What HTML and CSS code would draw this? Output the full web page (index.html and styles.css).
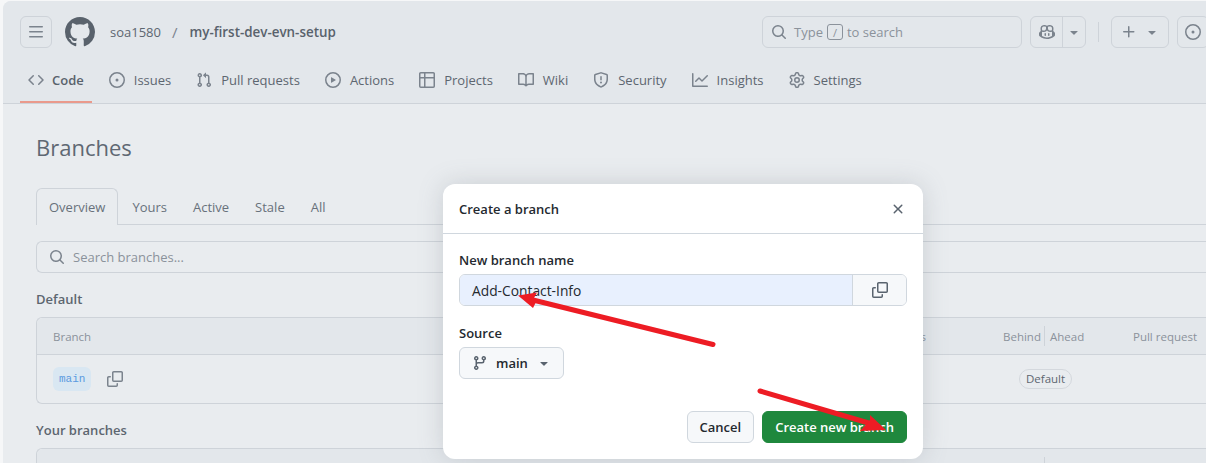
FILE: index.html
```html
<!DOCTYPE html>
<html lang="en">
<head>
    <meta charset="UTF-8">
    <title>Branches</title>
    <link rel="stylesheet" href="styles.css">
</head>
<body>
    <svg class="icon-defs" aria-hidden="true">
        <symbol id="i-bars" viewBox="0 0 16 16"><path d="M1 2.75A.75.75 0 0 1 1.75 2h12.5a.75.75 0 0 1 0 1.5H1.75A.75.75 0 0 1 1 2.75Zm0 5A.75.75 0 0 1 1.75 7h12.5a.75.75 0 0 1 0 1.5H1.75A.75.75 0 0 1 1 7.75ZM1.75 12h12.5a.75.75 0 0 1 0 1.5H1.75a.75.75 0 0 1 0-1.5Z"/></symbol>
        <symbol id="i-github" viewBox="0 0 16 16"><path d="M8 0c4.42 0 8 3.58 8 8a8.013 8.013 0 0 1-5.45 7.59c-.4.08-.55-.17-.55-.38 0-.27.01-1.13.01-2.2 0-.75-.25-1.23-.54-1.48 1.78-.2 3.65-.88 3.65-3.95 0-.88-.31-1.59-.82-2.15.08-.2.36-1.02-.08-2.12 0 0-.67-.22-2.2.82-.64-.18-1.32-.27-2-.27-.68 0-1.36.09-2 .27-1.53-1.03-2.2-.82-2.2-.82-.44 1.1-.16 1.92-.08 2.12-.51.56-.82 1.28-.82 2.15 0 3.06 1.86 3.75 3.64 3.95-.23.2-.44.55-.51 1.07-.46.21-1.61.55-2.33-.66-.15-.24-.6-.83-1.23-.82-.67.01-.27.38.01.53.34.19.73.9.82 1.13.16.45.68 1.31 2.69.94 0 .67.01 1.3.01 1.49 0 .21-.15.45-.55.38A7.995 7.995 0 0 1 0 8c0-4.42 3.58-8 8-8Z"/></symbol>
        <symbol id="i-search" viewBox="0 0 16 16"><path d="M10.68 11.74a6 6 0 0 1-7.922-8.982 6 6 0 0 1 8.982 7.922l3.04 3.04a.749.749 0 0 1-.326 1.275.749.749 0 0 1-.734-.215ZM11.5 7a4.499 4.499 0 1 0-8.997 0A4.499 4.499 0 0 0 11.5 7Z"/></symbol>
        <symbol id="i-code" viewBox="0 0 16 16"><path d="m11.28 3.22 4.25 4.25a.75.75 0 0 1 0 1.06l-4.25 4.25a.749.749 0 0 1-1.275-.326.749.749 0 0 1 .215-.734L13.94 8l-3.72-3.72a.749.749 0 0 1 .326-1.275.749.749 0 0 1 .734.215Zm-6.56 0a.751.751 0 0 1 1.042.018.751.751 0 0 1 .018 1.042L2.06 8l3.72 3.72a.749.749 0 0 1-.326 1.275.749.749 0 0 1-.734-.215L.47 8.53a.75.75 0 0 1 0-1.06Z"/></symbol>
        <symbol id="i-issue" viewBox="0 0 16 16"><path d="M8 9.5a1.5 1.5 0 1 0 0-3 1.5 1.5 0 0 0 0 3Z"/><path d="M8 0a8 8 0 1 1 0 16A8 8 0 0 1 8 0ZM1.5 8a6.5 6.5 0 1 0 13 0 6.5 6.5 0 0 0-13 0Z"/></symbol>
        <symbol id="i-pr" viewBox="0 0 16 16"><path d="M1.5 3.25a2.25 2.25 0 1 1 3 2.122v5.256a2.251 2.251 0 1 1-1.5 0V5.372A2.25 2.25 0 0 1 1.5 3.25Zm5.677-.177L9.573.677A.25.25 0 0 1 10 .854V2.5h1A2.5 2.5 0 0 1 13.5 5v5.628a2.251 2.251 0 1 1-1.5 0V5a1 1 0 0 0-1-1h-1v1.646a.25.25 0 0 1-.427.177L7.177 3.427a.25.25 0 0 1 0-.354ZM3.75 2.5a.75.75 0 1 0 0 1.5.75.75 0 0 0 0-1.5Zm0 9.5a.75.75 0 1 0 0 1.5.75.75 0 0 0 0-1.5Zm8.25.75a.75.75 0 1 0 1.5 0 .75.75 0 0 0-1.5 0Z"/></symbol>
        <symbol id="i-play" viewBox="0 0 16 16"><path d="M8 0a8 8 0 1 1 0 16A8 8 0 0 1 8 0ZM1.5 8a6.5 6.5 0 1 0 13 0 6.5 6.5 0 0 0-13 0Zm4.879-2.773 4.264 2.559a.25.25 0 0 1 0 .428l-4.264 2.559A.25.25 0 0 1 6 10.559V5.442a.25.25 0 0 1 .379-.215Z"/></symbol>
        <symbol id="i-table" viewBox="0 0 16 16"><path d="M0 1.75C0 .784.784 0 1.75 0h12.5C15.216 0 16 .784 16 1.75v12.5A1.75 1.75 0 0 1 14.25 16H1.75A1.75 1.75 0 0 1 0 14.25ZM6.5 6.5v8h7.75a.25.25 0 0 0 .25-.25V6.5Zm8-1.5V1.75a.25.25 0 0 0-.25-.25H6.5V5Zm-13 1.5v7.75c0 .138.112.25.25.25H5v-8ZM5 5V1.5H1.75a.25.25 0 0 0-.25.25V5Z"/></symbol>
        <symbol id="i-book" viewBox="0 0 16 16"><path d="M0 1.75A.75.75 0 0 1 .75 1h4.253c1.227 0 2.317.59 3 1.501A3.743 3.743 0 0 1 11.006 1h4.245a.75.75 0 0 1 .75.75v10.5a.75.75 0 0 1-.75.75h-4.507a2.25 2.25 0 0 0-1.591.659l-.622.621a.75.75 0 0 1-1.06 0l-.622-.621A2.25 2.25 0 0 0 5.258 13H.75a.75.75 0 0 1-.75-.75Zm7.251 10.324.004-5.073-.002-2.253A2.25 2.25 0 0 0 5.003 2.5H1.5v9h3.757a3.75 3.75 0 0 1 1.994.574ZM8.755 4.75l-.004 7.322a3.752 3.752 0 0 1 1.992-.572H14.5v-9h-3.495a2.25 2.25 0 0 0-2.25 2.25Z"/></symbol>
        <symbol id="i-shield" viewBox="0 0 16 16"><path d="M7.467.133a1.748 1.748 0 0 1 1.066 0l5.25 1.68A1.75 1.75 0 0 1 15 3.48V7c0 1.566-.32 3.182-1.303 4.682-.983 1.498-2.585 2.813-5.032 3.855a1.697 1.697 0 0 1-1.33 0c-2.447-1.042-4.049-2.357-5.032-3.855C1.32 10.182 1 8.566 1 7V3.48a1.75 1.75 0 0 1 1.217-1.667Zm.61 1.429a.25.25 0 0 0-.153 0l-5.25 1.68a.25.25 0 0 0-.174.238V7c0 1.358.275 2.666 1.057 3.86.784 1.194 2.121 2.34 4.366 3.297a.196.196 0 0 0 .154 0c2.245-.956 3.582-2.104 4.366-3.298C13.225 9.666 13.5 8.36 13.5 7V3.48a.251.251 0 0 0-.174-.237l-5.25-1.68ZM8.75 4.75v3a.75.75 0 0 1-1.5 0v-3a.75.75 0 0 1 1.5 0ZM9 10.5a1 1 0 1 1-2 0 1 1 0 0 1 2 0Z"/></symbol>
        <symbol id="i-graph" viewBox="0 0 16 16"><path d="M1.5 1.75V13.5h13.75a.75.75 0 0 1 0 1.5H.75a.75.75 0 0 1-.75-.75V1.75a.75.75 0 0 1 1.5 0Zm14.28 2.53-5.25 5.25a.75.75 0 0 1-1.06 0L7 7.06 4.28 9.78a.751.751 0 0 1-1.042-.018.751.751 0 0 1-.018-1.042l3.25-3.25a.75.75 0 0 1 1.06 0L10 7.94l4.72-4.72a.751.751 0 0 1 1.042.018.751.751 0 0 1 .018 1.042Z"/></symbol>
        <symbol id="i-gear" viewBox="0 0 16 16"><path d="M8 0a8.2 8.2 0 0 1 .701.031C9.444.095 9.99.645 10.16 1.29l.288 1.107c.018.066.079.158.212.224.231.114.454.243.668.386.123.082.233.09.299.071l1.103-.303c.644-.176 1.392.021 1.82.63.27.385.506.792.704 1.218.315.675.111 1.422-.364 1.891l-.814.806c-.049.048-.098.147-.088.294.016.257.016.515 0 .772-.01.147.038.246.088.294l.814.806c.475.469.679 1.216.364 1.891a7.977 7.977 0 0 1-.704 1.217c-.428.61-1.176.807-1.82.63l-1.102-.302c-.067-.019-.177-.011-.3.071a5.909 5.909 0 0 1-.668.386c-.133.066-.194.158-.211.224l-.29 1.106c-.168.646-.715 1.196-1.458 1.26a8.006 8.006 0 0 1-1.402 0c-.743-.064-1.289-.614-1.458-1.26l-.289-1.106c-.018-.066-.079-.158-.212-.224a5.738 5.738 0 0 1-.668-.386c-.123-.082-.233-.09-.299-.071l-1.103.303c-.644.176-1.392-.021-1.82-.63a8.12 8.12 0 0 1-.704-1.218c-.315-.675-.111-1.422.363-1.891l.815-.806c.05-.048.098-.147.088-.294a6.214 6.214 0 0 1 0-.772c.01-.147-.038-.246-.088-.294l-.815-.806C.635 6.045.431 5.298.746 4.623a7.92 7.92 0 0 1 .704-1.217c.428-.61 1.176-.807 1.82-.63l1.102.302c.067.019.177.011.3-.071.214-.143.437-.272.668-.386.133-.066.194-.158.211-.224l.29-1.106C6.009.645 6.556.095 7.299.03 7.53.01 7.764 0 8 0Zm-.571 1.525c-.036.003-.108.036-.137.146l-.289 1.105c-.147.561-.549.967-.998 1.189-.173.086-.34.183-.5.29-.417.278-.97.423-1.529.27l-1.103-.303c-.109-.03-.175.016-.195.045-.22.312-.412.644-.573.99-.014.031-.021.11.059.19l.815.806c.411.406.562.957.53 1.456a4.709 4.709 0 0 0 0 .582c.032.499-.119 1.05-.53 1.456l-.815.806c-.081.08-.073.159-.059.19.162.346.353.677.573.989.02.03.085.076.195.046l1.102-.303c.56-.153 1.113-.008 1.53.27.161.107.328.204.501.29.447.222.85.629.997 1.189l.289 1.105c.029.109.101.143.137.146a6.6 6.6 0 0 0 1.142 0c.036-.3.108-.036.137-.146l.289-1.105c.147-.561.549-.967.998-1.189.173-.086.34-.183.5-.29.417-.278.97-.423 1.529-.27l1.103.303c.109.029.175-.016.195-.045.22-.313.411-.644.573-.99.014-.031.021-.11-.059-.19l-.815-.806c-.411-.406-.562-.957-.53-1.456a4.709 4.709 0 0 0 0-.582c-.032-.499.119-1.05.53-1.456l.815-.806c.081-.08.073-.159.059-.19a6.464 6.464 0 0 0-.573-.989c-.02-.03-.085-.076-.195-.046l-1.102.303c-.56.153-1.113.008-1.53-.27a4.44 4.44 0 0 0-.501-.29c-.447-.222-.85-.629-.997-1.189l-.289-1.105c-.029-.11-.101-.143-.137-.146a6.6 6.6 0 0 0-1.142 0ZM11 8a3 3 0 1 1-6 0 3 3 0 0 1 6 0ZM9.500 8a1.500 1.500 0 1 0-3.001.001A1.500 1.500 0 0 0 9.500 8Z"/></symbol>
        <symbol id="i-copy" viewBox="0 0 16 16"><path d="M0 6.75C0 5.784.784 5 1.75 5h1.5a.75.75 0 0 1 0 1.5h-1.5a.25.25 0 0 0-.25.25v7.5c0 .138.112.25.25.25h7.5a.25.25 0 0 0 .25-.25v-1.5a.75.75 0 0 1 1.5 0v1.5A1.75 1.75 0 0 1 9.25 16h-7.5A1.75 1.75 0 0 1 0 14.25Z"/><path d="M5 1.75C5 .784 5.784 0 6.75 0h7.5C15.216 0 16 .784 16 1.75v7.5A1.75 1.75 0 0 1 14.25 11h-7.5A1.75 1.75 0 0 1 5 9.25Zm1.75-.25a.25.25 0 0 0-.25.25v7.5c0 .138.112.25.25.25h7.5a.25.25 0 0 0 .25-.25v-7.5a.25.25 0 0 0-.25-.25Z"/></symbol>
        <symbol id="i-branch" viewBox="0 0 16 16"><path d="M9.5 3.25a2.25 2.25 0 1 1 3 2.122V6A2.5 2.5 0 0 1 10 8.5H6a1 1 0 0 0-1 1v1.128a2.251 2.251 0 1 1-1.5 0V5.372a2.25 2.25 0 1 1 1.5 0v1.836A2.493 2.493 0 0 1 6 7h4a1 1 0 0 0 1-1v-.628A2.25 2.25 0 0 1 9.5 3.25Zm-6 0a.75.75 0 1 0 1.5 0 .75.75 0 0 0-1.5 0Zm8.25-.75a.75.75 0 1 0 0 1.5.75.75 0 0 0 0-1.5ZM4.25 12a.75.75 0 1 0 0 1.5.75.75 0 0 0 0-1.5Z"/></symbol>
        <symbol id="i-x" viewBox="0 0 16 16"><path d="M3.72 3.72a.75.75 0 0 1 1.06 0L8 6.94l3.22-3.22a.749.749 0 0 1 1.275.326.749.749 0 0 1-.215.734L9.06 8l3.22 3.22a.749.749 0 0 1-.326 1.275.749.749 0 0 1-.734-.215L8 9.06l-3.22 3.22a.751.751 0 0 1-1.042-.018.751.751 0 0 1-.018-1.042L6.94 8 3.72 4.78a.75.75 0 0 1 0-1.06Z"/></symbol>
        <symbol id="i-plus" viewBox="0 0 16 16"><path d="M7.75 2a.75.75 0 0 1 .75.75V7h4.25a.75.75 0 0 1 0 1.5H8.5v4.25a.75.75 0 0 1-1.5 0V8.5H2.75a.75.75 0 0 1 0-1.5H7V2.75A.75.75 0 0 1 7.75 2Z"/></symbol>
        <symbol id="i-caret" viewBox="0 0 16 16"><path d="m4.427 7.427 3.396 3.396a.25.25 0 0 0 .354 0l3.396-3.396A.25.25 0 0 0 11.396 7H4.604a.25.25 0 0 0-.177.427Z"/></symbol>
        <symbol id="i-copilot" viewBox="0 0 16 16"><path d="M7.998 15.035c-4.562 0-7.873-2.914-7.998-3.749V9.338c.085-.628.677-1.686 1.588-2.065.013-.07.024-.143.036-.218.029-.183.06-.384.126-.612-.201-.508-.254-1.084-.254-1.656 0-.87.128-1.769.693-2.484.579-.733 1.494-1.124 2.724-1.261 1.206-.134 2.262.034 2.944.765.05.053.096.108.139.165.044-.057.094-.112.143-.165.682-.731 1.738-.899 2.944-.765 1.23.137 2.145.528 2.724 1.261.566.715.693 1.614.693 2.484 0 .572-.053 1.148-.254 1.656.066.228.098.429.126.612.012.076.024.148.037.218.924.385 1.522 1.471 1.591 2.095v1.872c0 .766-3.351 3.795-8.002 3.795Zm0-1.485c2.28 0 4.584-1.11 5.002-1.433V7.862l-.023-.116c-.49.21-1.075.291-1.727.291-1.146 0-2.059-.327-2.71-.991A3.222 3.222 0 0 1 8 6.303a3.24 3.24 0 0 1-.544.743c-.65.664-1.563.991-2.71.991-.652 0-1.236-.081-1.727-.291l-.023.116v4.255c.419.323 2.722 1.433 5.002 1.433ZM6.762 2.83c-.193-.206-.637-.413-1.682-.297-1.019.113-1.479.404-1.713.7-.247.312-.369.789-.369 1.554 0 .793.129 1.171.308 1.371.162.181.519.379 1.442.379.853 0 1.339-.235 1.638-.54.315-.322.527-.827.617-1.553.117-.935-.037-1.395-.241-1.614Zm4.155-.297c-1.044-.116-1.488.091-1.681.297-.204.219-.359.679-.242 1.614.091.726.303 1.231.618 1.553.299.305.784.54 1.638.54.922 0 1.28-.198 1.442-.379.179-.2.308-.578.308-1.371 0-.765-.123-1.242-.37-1.554-.233-.296-.693-.587-1.713-.7Z"/><path d="M6.25 9.037a.75.75 0 0 1 .75.75v1.501a.75.75 0 0 1-1.5 0V9.787a.75.75 0 0 1 .75-.75Zm4.25.75v1.501a.75.75 0 0 1-1.5 0V9.787a.75.75 0 0 1 1.5 0Z"/></symbol>
    </svg>

    <div class="page">
        <header class="header">
            <div class="top-row">
                <button class="square-btn"><svg class="icon"><use href="#i-bars"/></svg></button>
                <svg class="logo"><use href="#i-github"/></svg>
                <div class="crumbs">
                    <span>soa1580</span>
                    <span class="crumb-sep">/</span>
                    <strong>my-first-dev-evn-setup</strong>
                </div>
                <div class="top-search">
                    <svg class="icon"><use href="#i-search"/></svg>
                    <span>Type</span>
                    <kbd class="slash-key">/</kbd>
                    <span>to search</span>
                </div>
                <div class="split-btn">
                    <span class="split-main"><svg class="icon"><use href="#i-copilot"/></svg></span>
                    <span class="split-side"><svg class="icon"><use href="#i-caret"/></svg></span>
                </div>
                <span class="top-divider"></span>
                <div class="plus-btn">
                    <svg class="icon"><use href="#i-plus"/></svg>
                    <svg class="icon"><use href="#i-caret"/></svg>
                </div>
                <button class="square-btn issue-btn"><svg class="icon"><use href="#i-issue"/></svg></button>
            </div>
            <nav class="repo-nav">
                <a class="nav-item active"><svg class="icon"><use href="#i-code"/></svg>Code</a>
                <a class="nav-item"><svg class="icon"><use href="#i-issue"/></svg>Issues</a>
                <a class="nav-item"><svg class="icon"><use href="#i-pr"/></svg>Pull requests</a>
                <a class="nav-item"><svg class="icon"><use href="#i-play"/></svg>Actions</a>
                <a class="nav-item"><svg class="icon"><use href="#i-table"/></svg>Projects</a>
                <a class="nav-item"><svg class="icon"><use href="#i-book"/></svg>Wiki</a>
                <a class="nav-item"><svg class="icon"><use href="#i-shield"/></svg>Security</a>
                <a class="nav-item"><svg class="icon"><use href="#i-graph"/></svg>Insights</a>
                <a class="nav-item"><svg class="icon"><use href="#i-gear"/></svg>Settings</a>
            </nav>
        </header>

        <main class="main">
            <h1 class="page-title">Branches</h1>
            <div class="tabs">
                <a class="tab selected">Overview</a>
                <a class="tab">Yours</a>
                <a class="tab">Active</a>
                <a class="tab">Stale</a>
                <a class="tab">All</a>
            </div>
            <div class="branch-search">
                <svg class="icon"><use href="#i-search"/></svg>
                <span>Search branches...</span>
            </div>

            <h2 class="section-title">Default</h2>
            <div class="table">
                <div class="table-head">
                    <span>Branch</span>
                    <span class="col-status">Check status</span>
                    <span></span>
                    <span class="col-behind">Behind</span>
                    <span class="col-ahead">Ahead</span>
                    <span>Pull request</span>
                </div>
                <div class="table-row">
                    <div class="branch-cell">
                        <code class="branch-chip">main</code>
                        <svg class="icon"><use href="#i-copy"/></svg>
                    </div>
                    <span class="pill">Default</span>
                </div>
            </div>

            <h2 class="section-title">Your branches</h2>
            <div class="table">
                <div class="table-head">
                    <span></span>
                    <span></span>
                    <span></span>
                    <span class="col-behind"></span>
                    <span></span>
                    <span></span>
                </div>
            </div>
        </main>

        <div class="dialog">
            <div class="dialog-head">
                <span class="dialog-title">Create a branch</span>
                <svg class="icon"><use href="#i-x"/></svg>
            </div>
            <div class="dialog-body">
                <label class="field-label">New branch name</label>
                <div class="name-field">
                    <span class="name-value">Add-Contact-Info</span>
                    <span class="name-copy"><svg class="icon"><use href="#i-copy"/></svg></span>
                </div>
                <label class="field-label source-label">Source</label>
                <button class="source-btn">
                    <svg class="icon"><use href="#i-branch"/></svg>
                    <span>main</span>
                    <svg class="icon"><use href="#i-caret"/></svg>
                </button>
            </div>
            <div class="dialog-foot">
                <button class="btn">Cancel</button>
                <button class="btn btn-green">Create new branch</button>
            </div>
        </div>
    </div>

    <!-- red arrows drawn over the screenshot -->
    <svg class="arrows" viewBox="0 0 1206 463">
        <path class="arrow-line" d="M713 344.500 533 300"/>
        <path class="arrow-head" d="M518 295.500 537 292.500 534 298 536 302 533 308Z"/>
        <path class="arrow-line" d="M760 391 872 424"/>
        <path class="arrow-head" d="M886 430 870 415 870 420 860 431Z"/>
    </svg>
</body>
</html>
```

FILE: styles.css
```css
* {
    box-sizing: border-box;
}
html, body {
    margin: 0;
    height: 100%;
    overflow: hidden;
}
body {
    position: relative;
    background: #f6f7f8;
    padding: 1px 0 0 3px;
    font-family: "Open Sans", "Noto Sans", sans-serif;
    font-size: 13px;
    color: #5d6670;
}
.icon-defs {
    position: absolute;
    width: 0;
    height: 0;
}
.icon {
    width: 16px;
    height: 16px;
    flex: none;
    fill: #7b838d;
}
.page {
    position: relative;
    width: 1203px;
    height: 462px;
    overflow: hidden;
    background: #e9ecef;
    border-top-left-radius: 8px;
}

/* header */
.header {
    height: 103px;
    padding-top: 15px;
    background: #e3e7eb;
    border-bottom: 1px solid #ced3d9;
}
.top-row {
    display: flex;
    align-items: center;
    height: 32px;
    padding-left: 17px;
}
.square-btn {
    width: 32px;
    height: 32px;
    display: flex;
    align-items: center;
    justify-content: center;
    padding: 0;
    background: none;
    border: 1px solid #ced3d9;
    border-radius: 6px;
    flex: none;
}
.logo {
    width: 30px;
    height: 30px;
    margin-left: 13px;
    fill: #59626c;
    flex: none;
}
.crumbs {
    display: flex;
    align-items: center;
    margin-left: 15px;
    width: 652px;
    flex: none;
}
.crumb-sep {
    margin: 0 12px 0 11px;
    font-size: 15px;
    color: #7b838d;
}
.crumbs strong {
    font-size: 13.400px;
    font-weight: 600;
    color: #59626c;
}
.top-search {
    width: 260px;
    height: 32px;
    display: flex;
    align-items: center;
    gap: 4px;
    padding-left: 8px;
    border: 1px solid #ced3d9;
    border-radius: 6px;
    color: #8b929b;
    flex: none;
}
.top-search .icon {
    margin-right: 3px;
}
.slash-key {
    width: 16px;
    height: 16px;
    display: flex;
    align-items: center;
    justify-content: center;
    border: 1px solid #8b929b;
    border-radius: 3px;
    font-family: inherit;
    font-size: 11px;
}
.split-btn {
    display: flex;
    width: 56px;
    height: 32px;
    margin-left: 8px;
    border: 1px solid #ced3d9;
    border-radius: 6px;
    flex: none;
}
.split-main, .split-side {
    display: flex;
    align-items: center;
    justify-content: center;
}
.split-main {
    width: 32px;
    border-right: 1px solid #ced3d9;
}
.split-side {
    flex: 1;
}
.top-divider {
    width: 1px;
    height: 20px;
    margin: 0 12px;
    background: #ced3d9;
    flex: none;
}
.plus-btn {
    display: flex;
    align-items: center;
    justify-content: center;
    gap: 7px;
    width: 58px;
    height: 32px;
    border: 1px solid #ced3d9;
    border-radius: 6px;
    flex: none;
}
.issue-btn {
    margin-left: 8px;
}
.repo-nav {
    display: flex;
    gap: 9px;
    margin-top: 16px;
    padding-left: 17px;
}
.nav-item {
    display: flex;
    align-items: center;
    gap: 9px;
    height: 39px;
    padding: 0 8px 7px;
    white-space: nowrap;
}
.nav-item.active {
    gap: 8px;
    font-weight: 600;
    color: #59626c;
    border-bottom: 2px solid #ea9a8c;
    padding-bottom: 5px;
}

/* page content */
.main {
    padding-left: 33px;
}
.page-title {
    margin: 27px 0 0;
    font-size: 22px;
    line-height: 32px;
    font-weight: 400;
    color: #5f6873;
}
.tabs {
    display: flex;
    height: 37px;
    margin-top: 25px;
    border-bottom: 1px solid #ced3d9;
}
.tab {
    display: flex;
    align-items: center;
    padding: 1px 13px 0;
    color: #68717b;
}
.tab.selected {
    margin: 0 1px -1px 0;
    padding: 0 12px;
    background: #e9ecef;
    border: 1px solid #ced3d9;
    border-bottom: none;
    border-radius: 6px 6px 0 0;
}
.branch-search {
    display: flex;
    align-items: center;
    gap: 8px;
    height: 32px;
    margin-top: 16px;
    padding-left: 12px;
    border: 1px solid #ced3d9;
    border-right: none;
    border-radius: 6px 0 0 6px;
    color: #8b929b;
}
.section-title {
    margin: 16px 0 0;
    font-size: 13px;
    line-height: 20px;
    font-weight: 600;
    color: #5d6670;
}
.table {
    margin-top: 8px;
    border: 1px solid #ced3d9;
    border-right: none;
    border-radius: 6px 0 0 6px;
}
.table-head {
    display: grid;
    grid-template-columns: 793px 80px 77px 42px 88px 120px;
    align-items: center;
    height: 36px;
    padding-left: 16px;
    background: #e3e7eb;
    border-radius: 6px 0 0 0;
    color: #8b929b;
    font-size: 11.500px;
    font-weight: 500;
}
.col-status {
    text-align: right;
    white-space: nowrap;
    direction: rtl;
}
.col-behind {
    height: 20px;
    line-height: 21px;
    border-right: 1px solid #ced3d9;
}
.col-ahead {
    padding-left: 5px;
}
.table-row {
    display: grid;
    grid-template-columns: 966px auto;
    align-items: center;
    height: 49px;
    padding-left: 16px;
    border-top: 1px solid #ced3d9;
}
.branch-cell {
    display: flex;
    align-items: center;
    gap: 16px;
}
.branch-chip {
    padding: 3px 6px;
    background: #d9e7f2;
    border-radius: 6px;
    font-family: "Liberation Mono", monospace;
    font-size: 11px;
    line-height: 18px;
    color: #5a9ae0;
}
.pill {
    justify-self: start;
    padding: 0 6px;
    line-height: 18px;
    border: 1px solid #d4d8dd;
    border-radius: 10px;
    font-size: 11.500px;
    font-weight: 500;
}

/* dialog */
.dialog {
    position: absolute;
    left: 440px;
    top: 183px;
    width: 480px;
    height: 275px;
    display: flex;
    flex-direction: column;
    background: #fff;
    border-radius: 12px;
    box-shadow: 0 0 24px rgba(110, 120, 130, 0.25);
    color: #24292f;
}
.dialog-head {
    display: flex;
    align-items: center;
    justify-content: space-between;
    height: 50px;
    padding: 0 17px 0 16px;
    border-bottom: 1px solid #d0d7de;
}
.dialog-head .icon {
    fill: #59636e;
}
.dialog-title {
    font-weight: 600;
}
.dialog-body {
    display: flex;
    flex-direction: column;
    align-items: flex-start;
    padding: 16px 16px 0;
    flex: 1;
}
.field-label {
    font-weight: 600;
    line-height: 20px;
}
.name-field {
    display: flex;
    align-items: stretch;
    width: 448px;
    height: 32px;
    margin-top: 4px;
    border: 1px solid #d0d7de;
    border-radius: 6px;
    overflow: hidden;
}
.name-value {
    flex: 1;
    display: flex;
    align-items: center;
    padding-left: 12px;
    background: #e8f0fe;
    font-size: 13.800px;
}
.name-copy {
    width: 54px;
    display: flex;
    align-items: center;
    justify-content: center;
    background: #f6f8fa;
    border-left: 1px solid #d0d7de;
}
.name-copy .icon, .source-btn .icon {
    fill: #59636e;
}
.source-label {
    margin-top: 17px;
}
.source-btn {
    display: flex;
    align-items: center;
    gap: 8px;
    height: 32px;
    width: 105px;
    margin-top: 4px;
    padding: 0 12px;
    background: #f6f8fa;
    border: 1px solid #d0d7de;
    border-radius: 6px;
    font: inherit;
    font-weight: 600;
    color: #24292f;
}
.dialog-foot {
    display: flex;
    justify-content: flex-end;
    gap: 8px;
    padding: 0 16px 16px;
}
.btn {
    height: 32px;
    padding: 0 12px;
    background: #f6f8fa;
    border: 1px solid #d0d7de;
    border-radius: 6px;
    font: inherit;
    font-weight: 600;
    color: #24292f;
}
.btn-green {
    background: #1f883d;
    border-color: #1f883d;
    color: #fff;
}

/* annotations */
.arrows {
    position: absolute;
    left: 0;
    top: 0;
    width: 1206px;
    height: 463px;
}
.arrow-line {
    fill: none;
    stroke: #ed1c24;
    stroke-width: 5;
    stroke-linecap: round;
}
.arrow-head {
    fill: #ed1c24;
}
```
